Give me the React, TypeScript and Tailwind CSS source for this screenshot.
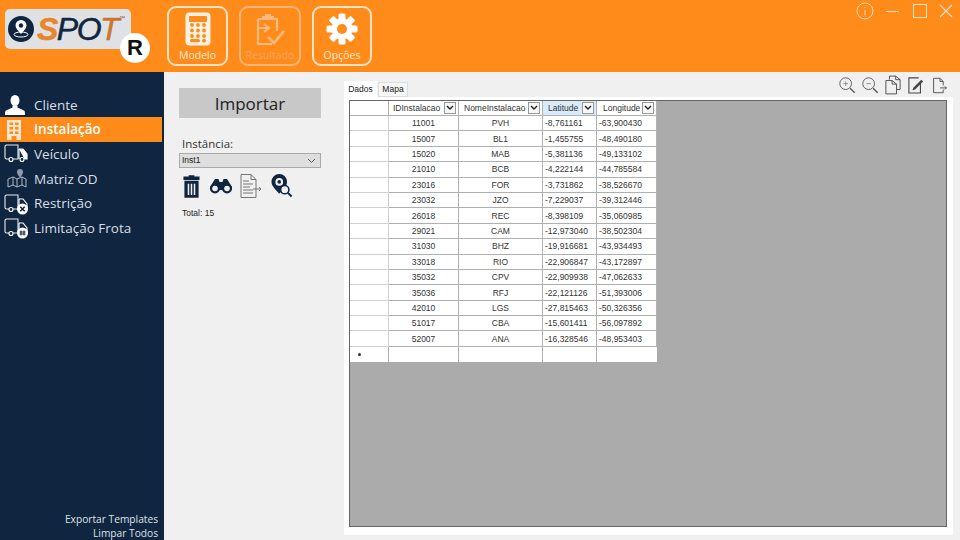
import React from "react";

const rows = [
  ["11001","PVH","-8,761161","-63,900430"],["15007","BL1","-1,455755","-48,490180"],["15020","MAB","-5,381136","-49,133102"],
  ["21010","BCB","-4,222144","-44,785584"],["23016","FOR","-3,731862","-38,526670"],["23032","JZO","-7,229037","-39,312446"],
  ["26018","REC","-8,398109","-35,060985"],["29021","CAM","-12,973040","-38,502304"],["31030","BHZ","-19,916681","-43,934493"],
  ["33018","RIO","-22,906847","-43,172897"],["35032","CPV","-22,909938","-47,062633"],["35036","RFJ","-22,121126","-51,393006"],
  ["42010","LGS","-27,815463","-50,326356"],["51017","CBA","-15,601411","-56,097892"],["52007","ANA","-16,328546","-48,953403"],
];

const Truck = ({ badge }: { badge?: "x" | "hash" }) => (
  <svg width="26" height="22" viewBox="0 0 26 22" fill="none">
    <path d="M5 16H2.500A1.500 1.500 0 0 1 1 14.500V3.500A1.500 1.500 0 0 1 2.500 2H14v14H9" stroke="#e8ebef" strokeWidth="1.100" />
    <path d="M15 6h4l4 5v5h-2.500M15 6v10" stroke="#fff" strokeWidth="1.100" fill={badge ? "none" : "#fff"} />
    <circle cx="7" cy="16.500" r="2" stroke="#fff" strokeWidth="1.100" />
    {!badge && <circle cx="18" cy="16.500" r="2" fill="#10253f" stroke="#fff" strokeWidth="1.100" />}
    {badge && <circle cx="18.500" cy="16" r="5.500" fill="#fff" />}
    {badge === "x" && <path d="M16.300 13.800l4.400 4.400M20.700 13.800l-4.400 4.400" stroke="#10253f" strokeWidth="1.600" />}
    {badge === "hash" && <path d="M17 13.500v5M20 13.500v5M15.500 15h6M15.500 17h6" stroke="#10253f" strokeWidth="1" />}
  </svg>
);

const Person = () => (
  <svg width="22" height="22" viewBox="0 0 22 22" fill="#fff">
    <ellipse cx="11" cy="6.500" rx="4.500" ry="5.500" />
    <path d="M8.500 11.500v2L2 16.500c-.8.400-1 1.500-1 4.500h20c0-3-.2-4.100-1-4.500l-6.500-3v-2z" />
  </svg>
);

const Building = () => (
  <svg width="20" height="22" viewBox="0 0 20 22">
    <path d="M3 1h14v20h-4.500v-4h-5v4H3z" fill="#ffe6cf" />
    <g fill="#ff8c1a">
      <rect x="5.500" y="3.500" width="3.500" height="2.500" /><rect x="11" y="3.500" width="3.500" height="2.500" />
      <rect x="5.500" y="8" width="3.500" height="2.500" /><rect x="11" y="8" width="3.500" height="2.500" />
      <rect x="5.500" y="12.500" width="3.500" height="2.500" /><rect x="11" y="12.500" width="3.500" height="2.500" />
    </g>
  </svg>
);

const MapPin = () => (
  <svg width="26" height="22" viewBox="0 0 26 22" fill="none" stroke="#aeb7c4" strokeWidth="1">
    <path d="M4 11l5-2 4 2 5-2 4 2v8l-4-2-5 2-4-2-5 2z" />
    <path d="M9 9v8M13 11v8M18 9v8" />
    <path d="M16 10c-2-3-3-4.500-3-6a3 3 0 0 1 6 0c0 1.500-1 3-3 6z" fill="#8e9aab" stroke="none" />
  </svg>
);

const navItems: [string, React.ReactNode, boolean][] = [
  ["Cliente", <Person />, false],
  ["Instalação", <Building />, true],
  ["Veículo", <Truck />, false],
  ["Matriz OD", <MapPin />, false],
  ["Restrição", <Truck badge="x" />, false],
  ["Limitação Frota", <Truck badge="hash" />, false],
];

const Calc = () => (
  <svg width="26" height="34" viewBox="0 0 26 34">
    <rect x="0.500" y="0.500" width="25" height="33" rx="4" fill="#fff2e4" />
    <rect x="4" y="4" width="18" height="6" rx="1" fill="#ff8c1a" />
    <g fill="#ff8c1a">
      {[13, 18.500, 24].map((y) => [7, 13, 19].map((x) => <circle key={`${x}${y}`} cx={x} cy={y} r="1.900" />))}
      <rect x="5" y="27" width="10" height="3.200" rx="1.500" />
      <circle cx="19" cy="28.700" r="1.900" />
    </g>
  </svg>
);

const ResultIcon = () => (
  <svg width="32" height="36" viewBox="0 0 32 36" fill="none" stroke="#f6b982" strokeWidth="2.200">
    <path d="M11 4h6M8 6h12" />
    <path d="M4 8h19v12M4 8v25h14" />
    <path d="M3 17h11m-4-4l5 4-5 4" />
    <path d="M14 26l6 6 10-12" strokeWidth="2.600" />
  </svg>
);

const Gear = () => (
  <svg width="32" height="32" viewBox="0 0 32 32">
    <g fill="#fff">
      {[0, 45, 90, 135, 180, 225, 270, 315].map((a) => (
        <rect key={a} x="12.500" y="0.500" width="7" height="8" rx="1.500" transform={`rotate(${a} 16 16)`} />
      ))}
      <circle cx="16" cy="16" r="10.500" />
    </g>
    <circle cx="16" cy="16" r="5" fill="#ff8c1a" />
  </svg>
);

const HeaderBtn = ({ label, icon, dim, w }: { label: string; icon: React.ReactNode; dim?: boolean; w: string }) => (
  <div className={`${w} h-[60px] rounded-[9px] border-2 flex flex-col items-center justify-between pt-[3px] pb-[2px] ${dim ? "border-[#f8b57a]" : "border-[#ffe3c6]"}`}>
    <div className="h-[36px] flex items-center justify-center">{icon}</div>
    <span className={`text-[10.500px] leading-[14px] ${dim ? "text-[#f3a463]" : "text-[#ffe9d4]"}`}>{label}</span>
  </div>
);

const Magnifier = ({ plus }: { plus?: boolean }) => (
  <svg width="18" height="18" viewBox="0 0 20 20" fill="none" stroke="#555" strokeWidth="1">
    <circle cx="8.500" cy="8.500" r="6.500" />
    <path d="M13.500 13.500l5 5" strokeWidth="1.500" />
    <path d={plus ? "M6 8.500h5M8.500 6v5" : "M6 8.500h5"} stroke="#888" />
  </svg>
);

const Trash = () => (
  <svg width="17" height="23" viewBox="0 0 18 24" fill="#10253f">
    <path d="M6 0h6v1.500h5.500V5H.5V1.500H6z" />
    <path d="M1.500 6h15v18h-15zM5 9v12h1.600V9zM8.200 9v12h1.600V9zM11.400 9v12H13V9z" fillRule="evenodd" />
  </svg>
);

const Binoculars = () => (
  <svg width="24" height="16" viewBox="0 0 24 16">
    <path d="M6 1h3.500l1 3h3l1-3H18l5 8-.5 3h-21L1 9z" fill="#10253f" />
    <circle cx="6" cy="10.500" r="5" fill="#10253f" /><circle cx="18" cy="10.500" r="5" fill="#10253f" />
    <circle cx="6" cy="10.500" r="2.800" fill="#f0f0f0" /><circle cx="18" cy="10.500" r="2.800" fill="#f0f0f0" />
  </svg>
);

const DocArrow = () => (
  <svg width="22" height="24" viewBox="0 0 22 24" fill="none" stroke="#666" strokeWidth="0.900">
    <path d="M1 .5h10l5 5v18H1zM11 .5v5h5" />
    <path d="M3 7h6M3 10h10M3 13h7M3 16h10M3 19h10" />
    <path d="M13 15h8m-2-2l2 2-2 2" />
  </svg>
);

const PinSearch = () => (
  <svg width="22" height="24" viewBox="0 0 24 26">
    <path d="M9 0a8.500 8.500 0 0 1 8.500 8.500c0 3-2 5.500-4 8L9 21.500 4.500 16.500c-2-2.500-4-5-4-8A8.500 8.500 0 0 1 9 0z" fill="#10253f" />
    <circle cx="9" cy="8.500" r="4.200" fill="#f0f0f0" />
    <circle cx="9" cy="8.500" r="2" fill="#10253f" />
    <circle cx="15" cy="17" r="4.500" fill="#f0f0f0" stroke="#10253f" strokeWidth="1.700" />
    <path d="M18.500 20.500l4 4" stroke="#10253f" strokeWidth="2.200" />
  </svg>
);

const Head = ({ w, label, active, pl }: { w: string; label: string; active?: boolean; pl: string }) => (
  <div className={`${w} ${pl} h-full border-r border-b border-[#b0b0b0] flex items-center justify-between pr-[2px] ${active ? "bg-[#d9ebf9]" : "bg-white"}`}>
    <span className="whitespace-nowrap pt-[1px]">{label}</span>
    <span className="w-[12px] h-[12px] border border-[#999] bg-[#f7f7f7] flex items-center justify-center shrink-0">
      <svg width="8" height="6" viewBox="0 0 8 6"><path d="M1 1l3 3 3-3" fill="none" stroke="#222" strokeWidth="1.400" /></svg>
    </span>
  </div>
);

const Cell = ({ w, children, center }: { w: string; children?: React.ReactNode; center?: boolean }) => (
  <div className={`${w} h-full border-r border-b border-[#b0b0b0] bg-white flex items-center overflow-hidden whitespace-nowrap pt-[1px] ${center ? "justify-center" : "pl-[2px]"}`}>
    {children}
  </div>
);

const TopDocIcons = () => (
  <div className="flex items-center pr-[5px] h-[24px] mt-[1px]">
    <Magnifier plus />
    <span className="ml-[5px] flex"><Magnifier /></span>
    <svg className="ml-[6px]" width="16" height="20" viewBox="0 0 18 22" fill="none" stroke="#444" strokeWidth="1">
      <path d="M5 5V1h7l5 4v11h-4" /><path d="M12 1v4h5" />
      <path d="M1 6h7l5 4v11H1z" fill="#f0f0f0" /><path d="M8 6v4h5" />
    </svg>
    <svg className="ml-[7px]" width="16" height="18" viewBox="0 0 18 20" fill="none" stroke="#444" strokeWidth="1.200">
      <path d="M14 6v13H1V2h11" />
      <path d="M6 13l-1 3 3-1 9-9-2-2z" fill="#444" stroke="none" />
    </svg>
    <svg className="ml-[8px]" width="16" height="17" viewBox="0 0 20 20" fill="none" stroke="#555" strokeWidth="1.200">
      <path d="M2 1h8l4 4v5M14 15v4H2V1M10 1v4h4" />
      <path d="M10 13h8m-2-2l2 2-2 2" />
    </svg>
  </div>
);

export default function App() {
  return (
    <div className="w-[960px] h-[540px] overflow-hidden flex flex-col bg-[#f0f0f0] font-['Open_Sans','Noto_Sans',sans-serif]">
      <header className="h-[72px] shrink-0 bg-[#ff8c1a] flex relative">
        <div className="relative w-[167px] shrink-0">
          <div className="absolute left-[5px] top-[9px] w-[126px] h-[40px] rounded-[5px] bg-[#dfe1e4] flex items-center pl-[3px]">
            <svg width="26" height="26" viewBox="2 2 26 26" className="shrink-0">
              <circle cx="15" cy="15" r="13" fill="#10253f" />
              <path d="M15 6a5.500 5.500 0 0 1 5.500 5.500c0 2.500-2.500 5-5.500 8.500-3-3.500-5.500-6-5.500-8.500A5.500 5.500 0 0 1 15 6z" fill="#fff" />
              <circle cx="15" cy="11.500" r="2.200" fill="#10253f" />
              <ellipse cx="15" cy="20.500" rx="7" ry="2.500" fill="none" stroke="#fff" strokeWidth="1" />
            </svg>
            <span className="italic font-['Liberation_Sans',sans-serif] text-[32px] leading-[40px] tracking-[-1.500px] ml-[3px] [-webkit-text-stroke:0.5px_currentColor]">
              <span className="text-[#e8872a] font-bold">S</span>
              <span className="text-[#10253f]">PO</span>
              <span className="text-[#c7772f]">T</span>
            </span>
            <span className="absolute left-[114px] top-[6px] text-[6px] leading-none text-[#666] font-['Liberation_Sans',sans-serif]">™</span>
          </div>
          <div className="absolute left-[120px] top-[33px] w-[30px] h-[30px] rounded-full bg-white flex items-center justify-center">
            <span className="font-['Liberation_Sans',sans-serif] font-bold text-[22px] leading-none text-[#111]">R</span>
          </div>
        </div>
        <div className="flex items-start gap-[11px] pt-[6px]">
          <HeaderBtn w="w-[61px]" label="Modelo" icon={<Calc />} />
          <HeaderBtn w="w-[62px]" label="Resultado" dim icon={<ResultIcon />} />
          <HeaderBtn w="w-[60px]" label="Opções" icon={<Gear />} />
        </div>
        <div className="ml-auto flex items-center h-[22px] pr-[7px]">
          <svg width="18" height="18" viewBox="0 0 18 18" fill="none" stroke="#ffd9ae" strokeWidth="1">
            <circle cx="9" cy="9" r="8" />
            <path d="M9 5v1M9 8v5" />
          </svg>
          <span className="ml-[12px] w-[13px] h-[1px] bg-[#ffe3c6]" />
          <span className="ml-[14px] w-[14px] h-[14px] border border-[#ffe3c6]" />
          <svg className="ml-[12px]" width="14" height="14" viewBox="0 0 14 14" stroke="#ffe3c6" strokeWidth="1.100"><path d="M1 1l12 12M13 1L1 13" /></svg>
        </div>
      </header>

      <div className="flex-1 flex min-h-0">
        <aside className="w-[164px] shrink-0 bg-[#10253f] flex flex-col pt-[20.600px]">
          {navItems.map(([label, icon, active]) => (
            <div key={label} className={`h-[24.700px] w-[162px] flex items-center ${active ? "bg-[#ff8c1a]" : ""}`}>
              <span className="w-[34px] pl-[4px] flex justify-start items-center shrink-0">{icon}</span>
              <span className={`pt-[1px] text-[13.500px] leading-none ${active ? "text-white font-semibold" : "text-[#d9dee5]"}`}>{label}</span>
            </div>
          ))}
          <div className="mt-auto pr-[6px] text-right text-[10.200px] leading-[14px] text-[#dfe3e8]">
            <div>Exportar Templates</div>
            <div>Limpar Todos</div>
          </div>
        </aside>

        <section className="w-[180px] shrink-0 pl-[15px] pt-[16px] flex flex-col items-start">
          <div className="w-[142px] h-[30px] bg-[#c8c8c8] flex items-center justify-center pt-[2px] text-[17px] text-[#222]">Importar</div>
          <div className="mt-[18px] pl-[3px] text-[11.500px] leading-[16px] text-[#333]">Instância:</div>
          <div className="mt-[1px] w-[142px] h-[15px] bg-[#dedede] border border-[#aaa] flex items-center justify-between pl-[2px] pr-[4px] font-['Liberation_Sans',sans-serif] text-[8.500px] text-[#222]">
            <span>Inst1</span>
            <svg width="9" height="6" viewBox="0 0 9 6"><path d="M1 1l3.500 3.500L8 1" fill="none" stroke="#555" strokeWidth="1" /></svg>
          </div>
          <div className="flex items-center mt-[4px] pl-[4px] h-[28px]">
            <Trash />
            <span className="ml-[9px] flex"><Binoculars /></span>
            <span className="ml-[7px] flex"><DocArrow /></span>
            <span className="ml-[9px] flex"><PinSearch /></span>
          </div>
          <div className="mt-[7px] pl-[3px] font-['Liberation_Sans',sans-serif] text-[8.500px] leading-[12px] text-[#222]">Total: 15</div>
        </section>

        <main className="flex-1 flex flex-col min-w-0 pr-[7px] pb-[5px]">
          <div className="flex items-start justify-between h-[25px]">
            <div className="flex items-end h-[25px] font-['Liberation_Sans',sans-serif] text-[8.500px] text-[#222]">
              <div className="w-[33px] h-[16px] bg-white flex items-center justify-center">Dados</div>
              <div className="ml-[1px] w-[30px] h-[15px] bg-[#f7f7f7] border border-[#ddd] flex items-center justify-center">Mapa</div>
            </div>
            <TopDocIcons />
          </div>
          <div className="flex-1 bg-white pl-[5px] pr-[6px] pt-[3px] pb-[8px] min-h-0">
            <div className="h-full bg-[#ababab] border border-[#666] font-['Liberation_Sans',sans-serif] text-[8.500px] text-[#333]">
              <div className="h-[15px] flex">
                <div className="w-[39px] h-full bg-white border-r border-b border-[#b0b0b0]" />
                <Head w="w-[70px]" pl="pl-[4px]" label="IDInstalacao" />
                <Head w="w-[84px]" pl="pl-[5px]" label="NomeInstalacao" />
                <Head w="w-[54px]" pl="pl-[5px]" label="Latitude" active />
                <Head w="w-[60px]" pl="pl-[6px]" label="Longitude" />
              </div>
              {rows.map((r) => (
                <div key={r[0]} className="h-[15.400px] flex">
                  <div className="w-[39px] h-full bg-white border-r border-b border-[#d0d0d0]" />
                  <Cell w="w-[70px]" center>{r[0]}</Cell>
                  <Cell w="w-[84px]" center>{r[1]}</Cell>
                  <Cell w="w-[54px]">{r[2]}</Cell>
                  <Cell w="w-[60px]">{r[3]}</Cell>
                </div>
              ))}
              <div className="h-[15px] flex">
                <div className="w-[39px] h-full bg-white border-r border-[#b0b0b0] flex items-center pl-[8px]">
                  <span className="w-[3px] h-[3px] rounded-full bg-[#333]" />
                </div>
                <div className="w-[70px] h-full bg-white border-r border-[#b0b0b0]" />
                <div className="w-[84px] h-full bg-white border-r border-[#b0b0b0]" />
                <div className="w-[54px] h-full bg-white border-r border-[#b0b0b0]" />
                <div className="w-[60px] h-full bg-white" />
              </div>
            </div>
          </div>
        </main>
      </div>
    </div>
  );
}
